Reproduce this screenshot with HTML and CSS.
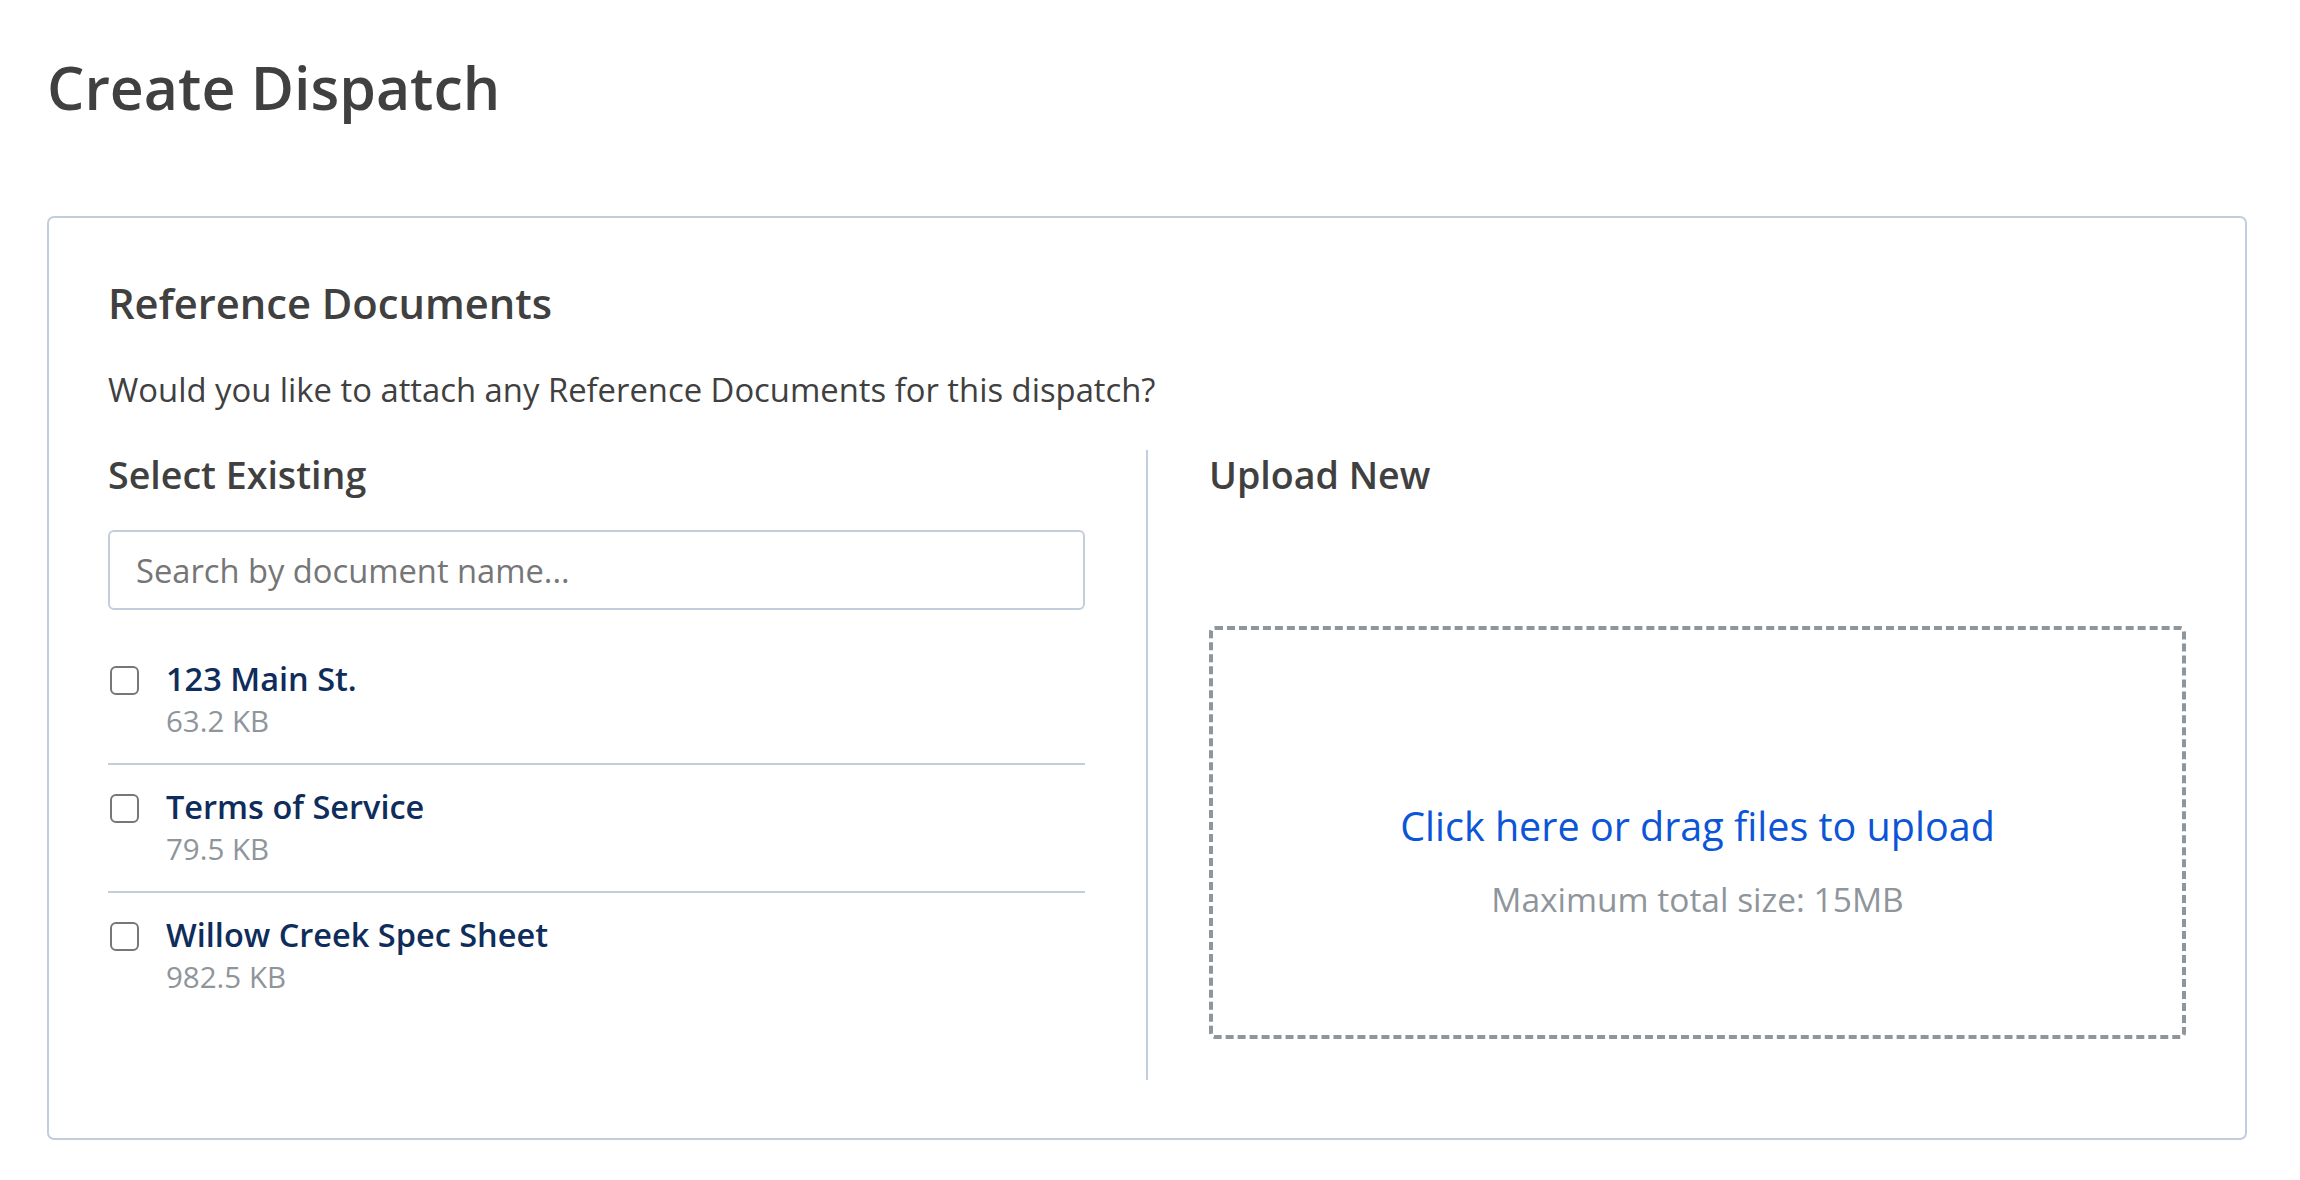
FILE: index.html
```html
<!DOCTYPE html>
<html lang="en">
<head>
    <meta charset="UTF-8">
    <meta name="viewport" content="width=device-width, initial-scale=1.0">
    <title>Create Dispatch</title>
    <link rel="stylesheet" href="styles.css">
</head>
<body>
    <div class="page">
        <h1 class="page-title">Create Dispatch</h1>

        <div class="card">
            <h2 class="card-title">Reference Documents</h2>
            <p class="card-desc">Would you like to attach any Reference Documents for this dispatch?</p>

            <div class="columns">
                <div class="col col-left">
                    <h3 class="col-title">Select Existing</h3>
                    <input class="search" type="text" placeholder="Search by document name...">
                    <ul class="doc-list">
                        <li class="doc">
                            <input class="check" type="checkbox">
                            <div class="doc-info">
                                <div class="doc-name">123 Main St.</div>
                                <div class="doc-size">63.2 KB</div>
                            </div>
                        </li>
                        <li class="doc">
                            <input class="check" type="checkbox">
                            <div class="doc-info">
                                <div class="doc-name">Terms of Service</div>
                                <div class="doc-size">79.5 KB</div>
                            </div>
                        </li>
                        <li class="doc">
                            <input class="check" type="checkbox">
                            <div class="doc-info">
                                <div class="doc-name">Willow Creek Spec Sheet</div>
                                <div class="doc-size">982.5 KB</div>
                            </div>
                        </li>
                    </ul>
                </div>
                <div class="divider"></div>
                <div class="col col-right">
                    <h3 class="col-title">Upload New</h3>
                    <div class="dropzone">
                        <div class="drop-link">Click here or drag files to upload</div>
                        <div class="drop-note">Maximum total size: 15MB</div>
                    </div>
                </div>
            </div>
        </div>
    </div>
</body>
</html>
```

FILE: styles.css
```css
body {
    margin: 0;
    font-family: 'Open Sans', 'Liberation Sans', sans-serif;
    background-color: #fff;
    color: #404040;
}
.page {
    padding: 53px 53px 0 47px;
}
.page-title {
    margin: 0 0 95px;
    font-size: 59px;
    line-height: 68px;
    font-weight: 600;
    color: #404040;
}
.card {
    border: 2px solid #c2cedb;
    border-radius: 7px;
    padding: 58px 59px 58px 59px;
}
.card-title {
    margin: 0;
    font-size: 41.7px;
    line-height: 54px;
    font-weight: 600;
}
.card-desc {
    margin: 40px 0 40px;
    font-size: 32.8px;
    line-height: 40px;
}
.columns {
    display: grid;
    grid-template-columns: 1fr 2px 1fr;
    column-gap: 61px;
}
.divider {
    background: #c2cedb;
}
.col-title {
    margin: 0;
    font-size: 37.6px;
    line-height: 50px;
    font-weight: 600;
}
.search {
    display: block;
    box-sizing: border-box;
    width: 100%;
    height: 80px;
    margin-top: 30px;
    padding: 0 26px;
    border: 2px solid #c2cedb;
    border-radius: 6px;
    font-family: inherit;
    font-size: 32.7px;
    color: #404040;
    outline: none;
}
.search::placeholder {
    color: #767676;
}
.doc-list {
    list-style: none;
    margin: 27px 0 0;
    padding: 0;
}
.doc {
    display: flex;
    align-items: flex-start;
    gap: 27px;
    padding: 21px 0;
    border-bottom: 2px solid #c2cedb;
}
.doc:last-child {
    border-bottom: none;
}
.check {
    appearance: none;
    -webkit-appearance: none;
    flex: none;
    width: 29px;
    height: 29px;
    margin: 8px 0 0 2px;
    border: 2px solid #777;
    border-radius: 6px;
    background: #fff;
}
.doc-name {
    font-size: 32.5px;
    line-height: 42px;
    font-weight: 600;
    color: #0f2d5c;
}
.doc-size {
    font-size: 29.5px;
    line-height: 42px;
    color: #8e959b;
}
.col-right {
    padding-bottom: 41px;
}
.dropzone {
    margin-top: 126px;
    height: 413px;
    box-sizing: border-box;
    padding-top: 56px;
    border: 4px dashed #8e959b;
    border-radius: 6px;
    display: flex;
    flex-direction: column;
    align-items: center;
    justify-content: center;
    gap: 29px;
}
.drop-link {
    font-size: 39.5px;
    line-height: 48px;
    color: #0b55d6;
}
.drop-note {
    font-size: 33.5px;
    line-height: 40px;
    color: #8e959b;
}
```
